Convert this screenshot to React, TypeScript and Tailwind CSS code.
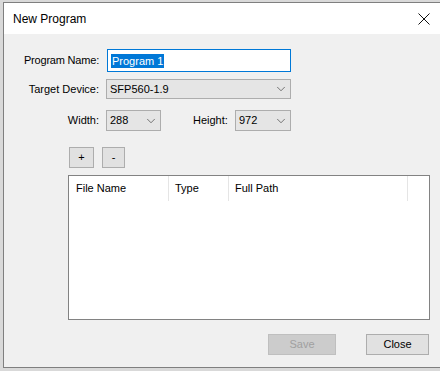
import { ChevronDown } from 'lucide-react'

const font = { fontFamily: '"Liberation Sans", Arial, sans-serif' }

function Combo({ value, w, h }: { value: string; w: string; h: string }) {
  return (
    <div className={`flex items-center justify-between border border-[#adadad] bg-[#e5e5e5] pl-[3px] pr-[2px] ${w} ${h}`}>
      <span className="text-[11px] leading-none text-black">{value}</span>
      <ChevronDown size={14} strokeWidth={1.1} className="text-[#333]" />
    </div>
  )
}

function Btn({ label, w, disabled }: { label: string; w: string; disabled?: boolean }) {
  return (
    <div
      className={`flex h-[21px] items-center justify-center border text-[11px] ${w} ${
        disabled ? 'border-[#bfbfbf] bg-[#cccccc] text-[#a0a0a0]' : 'border-[#adadad] bg-[#e1e1e1] text-black'
      }`}
    >
      {label}
    </div>
  )
}

export default function App() {
  return (
    <div className="h-[371px] w-[440px] overflow-hidden bg-[#d9d9d9] pl-[3px] pt-[2px]" style={font}>
      <div className="flex h-[366px] w-[437px] flex-col border-y border-l border-[#7f7f7f] bg-[#f0f0f0]">
        {/* Title bar */}
        <div className="flex h-[31px] items-center justify-between bg-white pl-[9px] pr-[9px]">
          <span className="text-[12px] text-black">New Program</span>
          <svg width="12" height="12" viewBox="0 0 12 12" className="mr-[1px]">
            <path d="M0.5 0.5 L11.5 11.5 M11.5 0.5 L0.5 11.5" stroke="#111" strokeWidth="1" />
          </svg>
        </div>

        {/* Body */}
        <div className="flex flex-1 flex-col">
          <div className="mt-[15px] flex h-[23px] items-center">
            <span className="w-[96px] pr-[1px] text-right text-[11px] tracking-[-0.2px] text-black">Program Name:</span>
            <div className="ml-[7px] flex h-[23px] w-[184px] items-center border border-[#0078d7] bg-white pl-[3px]">
              <span className="bg-[#0078d7] px-[1px] text-[11px] leading-[14px] text-white">Program 1</span>
            </div>
          </div>

          <div className="mt-[7px] flex h-[20px] items-center">
            <span className="w-[96px] pr-[1px] text-right text-[11px] text-black">Target Device:</span>
            <div className="ml-[6px]">
              <Combo value="SFP560-1.9" w="w-[185px]" h="h-[20px]" />
            </div>
          </div>

          <div className="mt-[11px] flex h-[21px] items-center">
            <span className="w-[96px] pr-[1px] text-right text-[11px] text-black">Width:</span>
            <div className="ml-[6px]">
              <Combo value="288" w="w-[55px]" h="h-[21px]" />
            </div>
            <span className="ml-[32px] w-[40px] text-[11px] text-black">Height:</span>
            <div className="ml-[2px]">
              <Combo value="972" w="w-[56px]" h="h-[21px]" />
            </div>
          </div>

          <div className="ml-[65px] mt-[16px] flex gap-[8px]">
            <Btn label="+" w="w-[25px]" />
            <Btn label="-" w="w-[23px]" />
          </div>

          {/* File list */}
          <div className="ml-[64px] mt-[7px] h-[145px] w-[362px] border border-[#828282] bg-white">
            <div className="flex h-[25px] items-center text-[11px] text-black">
              <div className="flex h-full w-[100px] items-center border-r border-[#e5e5e5] pl-[7px]">File Name</div>
              <div className="flex h-full w-[60px] items-center border-r border-[#e5e5e5] pl-[6px]">Type</div>
              <div className="flex h-full w-[179px] items-center border-r border-[#e5e5e5] pl-[6px]">Full Path</div>
            </div>
          </div>

          <div className="mr-[11px] mt-[14px] flex justify-end gap-[30px]">
            <Btn label="Save" w="w-[68px]" disabled />
            <Btn label="Close" w="w-[63px]" />
          </div>
        </div>
      </div>
    </div>
  )
}
